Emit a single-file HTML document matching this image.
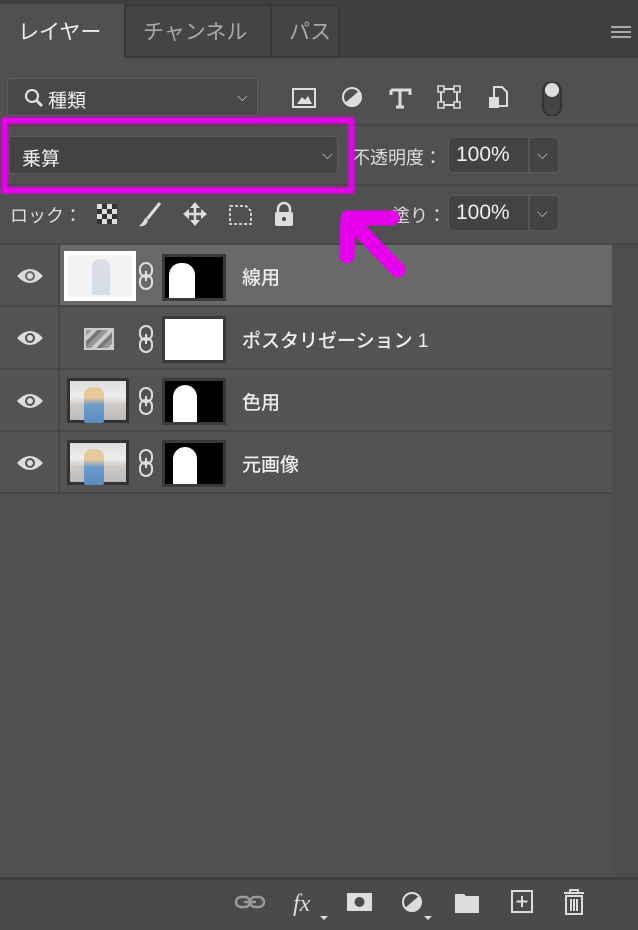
<!DOCTYPE html>
<html><head><meta charset="utf-8"><style>
*{margin:0;padding:0;box-sizing:border-box}
body{width:638px;height:930px;background:#505050;position:relative;overflow:hidden;font-family:"Liberation Sans","Noto Sans CJK JP",sans-serif;color:#ddd}
.a{position:absolute}
.t{font-size:20px}
.row{position:absolute;left:0;width:612px;height:62px;background:#535353;border-bottom:2px solid #474747}
.row .ec{position:absolute;left:0;top:0;width:60px;height:100%;border-right:2px solid #474747;background:#535353}
.thumb{position:absolute;top:8px;width:62px;height:45px;border:3px solid #333}
.mask{position:absolute;left:162px;top:8px;width:64px;height:47px;background:#000;border:3px solid #3a3a3a;overflow:hidden}
.name{position:absolute;left:242px;top:18px;font-size:19px;color:#eee;font-weight:500}
.photo{background:linear-gradient(180deg,#ddd 0%,#eee 40%,#cfc9c5 60%,#bbb 100%)}
</style></head><body>
<div class="a" style="left:0;top:0;width:638px;height:58px;background:#3f3f3f"></div>
<div class="a" style="left:0;top:4px;width:124px;height:56px;background:#505050"></div>
<div class="a" style="left:124px;top:4px;width:148px;height:54px;background:#444;border:2px solid #383838"></div>
<div class="a" style="left:272px;top:4px;width:68px;height:54px;background:#444;border:2px solid #383838;border-left:none"></div>
<div class="a t" style="left:18px;top:16px;color:#eee;font-size:21px">レイヤー</div>
<div class="a t" style="left:143px;top:16px;color:#aaa;font-size:21px">チャンネル</div>
<div class="a t" style="left:289px;top:16px;color:#aaa;font-size:21px">パス</div>
<div class="a" style="left:611px;top:26px;width:20px;height:12px;border-top:2px solid #aaa;border-bottom:2px solid #aaa"><div style="margin-top:3px;border-top:2px solid #aaa"></div></div>
<div class="a" style="left:7px;top:78px;width:251px;height:38px;background:#484848;border:1px solid #5e5e5e;border-radius:4px"></div>
<svg class="a" style="left:24px;top:88px" width="20" height="20"><circle cx="8" cy="8" r="6" fill="none" stroke="#ddd" stroke-width="2.2"/><line x1="12" y1="12" x2="18" y2="18" stroke="#ddd" stroke-width="3"/></svg>
<div class="a" style="left:48px;top:86px;font-size:19px;color:#eee">種類</div>
<div class="a" style="left:237px;top:88px;font-size:14px;color:#ccc">⌵</div>
<svg class="a" style="left:290px;top:82px" width="275" height="34">
<rect x="3" y="7" width="22" height="18" fill="none" stroke="#ddd" stroke-width="2"/><path d="M7 22 L12 15 L15 18 L18 14 L22 22Z" fill="#ddd"/>
<circle cx="62" cy="15" r="9" fill="none" stroke="#ddd" stroke-width="2"/><path d="M55 21 L69 9 A9 9 0 0 1 55 21Z" fill="#ddd"/>
<path d="M101 8 H120 V13 M110 8 V25 M106 25 H114 M101 8 V13" stroke="#ddd" stroke-width="3" fill="none"/>
<rect x="151" y="7" width="16" height="16" fill="none" stroke="#ddd" stroke-width="2"/><rect x="148" y="4" width="6" height="6" fill="#505050" stroke="#ddd" stroke-width="1.5"/><rect x="164" y="4" width="6" height="6" fill="#505050" stroke="#ddd" stroke-width="1.5"/><rect x="148" y="20" width="6" height="6" fill="#505050" stroke="#ddd" stroke-width="1.5"/><rect x="164" y="20" width="6" height="6" fill="#505050" stroke="#ddd" stroke-width="1.5"/>
<path d="M204 5 H212 L217 10 V24 H204Z" fill="none" stroke="#ddd" stroke-width="2"/><rect x="199" y="15" width="10" height="11" fill="#ddd"/>
<rect x="253" y="0" width="18" height="34" rx="9" fill="#444" stroke="#333" stroke-width="2"/><circle cx="262" cy="8" r="7" fill="#ddd"/>
</svg>
<div class="a" style="left:0;top:124px;width:638px;height:2px;background:#474747"></div>
<div class="a" style="left:8px;top:136px;width:330px;height:38px;background:#434343;border:1px solid #5a5a5a;border-radius:4px"></div>
<div class="a" style="left:22px;top:144px;font-size:19px;color:#eee">乗算</div>
<div class="a" style="left:322px;top:146px;font-size:14px;color:#ccc">⌵</div>
<div class="a" style="left:352px;top:144px;font-size:18px;color:#ddd">不透明度：</div>
<div class="a" style="left:448px;top:137px;width:111px;height:36px;background:#434343;border:1px solid #5a5a5a;border-radius:4px"></div>
<div class="a" style="left:528px;top:137px;width:2px;height:36px;background:#555"></div>
<div class="a" style="left:456px;top:143px;font-size:21px;color:#eee">100%</div>
<div class="a" style="left:537px;top:146px;font-size:14px;color:#ccc">⌵</div>
<div class="a" style="left:0;top:184px;width:638px;height:2px;background:#474747"></div>
<div class="a" style="left:10px;top:202px;font-size:18px;color:#ddd">ロック：</div>
<svg class="a" style="left:95px;top:200px" width="210" height="28">
<rect x="2" y="4" width="20" height="20" fill="#ddd"/><g fill="#333"><rect x="7" y="4" width="5" height="5"/><rect x="17" y="4" width="5" height="5"/><rect x="2" y="9" width="5" height="5"/><rect x="12" y="9" width="5" height="5"/><rect x="7" y="14" width="5" height="5"/><rect x="17" y="14" width="5" height="5"/><rect x="2" y="19" width="5" height="5"/><rect x="12" y="19" width="5" height="5"/></g>
<path d="M65 3 L52 19" stroke="#ddd" stroke-width="3"/><path d="M50 18 Q54 20 52 23 Q49 27 44 26 Q48 23 50 18Z" fill="#ddd"/>
<path d="M100 4 V24 M90 14 H110" stroke="#ddd" stroke-width="2.5"/><path d="M95 8 L100 2 L105 8Z M95 20 L100 26 L105 20Z M94 9 L88 14 L94 19Z M106 9 L112 14 L106 19Z" fill="#ddd"/>
<path d="M135 6 H151 L156 11 V24 H135Z" fill="none" stroke="#ddd" stroke-width="1.8" stroke-dasharray="3 2"/>
<rect x="180" y="12" width="18" height="14" rx="2" fill="#ddd"/><path d="M183 13 V9 A6 6 0 0 1 195 9 V13" fill="none" stroke="#ddd" stroke-width="2.5"/><circle cx="189" cy="19" r="2" fill="#444"/>
</svg>
<div class="a" style="left:392px;top:202px;font-size:18px;color:#ddd">塗り：</div>
<div class="a" style="left:448px;top:195px;width:111px;height:36px;background:#434343;border:1px solid #5a5a5a;border-radius:4px"></div>
<div class="a" style="left:528px;top:195px;width:2px;height:36px;background:#555"></div>
<div class="a" style="left:456px;top:201px;font-size:21px;color:#eee">100%</div>
<div class="a" style="left:537px;top:204px;font-size:14px;color:#ccc">⌵</div>
<div class="a" style="left:0;top:243px;width:638px;height:2px;background:#474747"></div>
<div class="a" style="left:612px;top:245px;width:26px;height:633px;background:#4d4d4d"></div>
<div class="row" style="top:245px;background:#696969"><div class="ec"></div>
<div class="thumb" style="left:64px;top:6px;width:72px;height:50px;border:4px solid #fff;background:#f3f3f3"><div style="margin:4px 0 0 24px;width:18px;height:36px;background:linear-gradient(#ccd,#bcd4e4);opacity:.6;border-radius:8px 8px 2px 2px"></div></div>
<div class="mask" style="top:9px"><div style="position:absolute;left:4px;top:6px;width:26px;height:40px;background:#fff;border-radius:12px 12px 0 0"></div></div>
<div class="name">線用</div></div>
<div class="row" style="top:308px"><div class="ec"></div>
<div class="a" style="left:84px;top:20px;width:30px;height:22px;background:repeating-linear-gradient(135deg,#999 0 4px,#ccc 4px 8px,#777 8px 12px);border:2px solid #ccc"></div>
<div class="mask" style="background:#fff"></div>
<div class="name">ポスタリゼーション 1</div></div>
<div class="row" style="top:370px"><div class="ec"></div>
<div class="thumb photo" style="left:67px"><div style="margin:6px 0 0 14px;width:20px;height:36px;background:linear-gradient(#e6c99a 0 30%,#6a9ccc 50%,#5a8cc0);border-radius:8px 8px 2px 2px"></div></div>
<div class="mask"><div style="position:absolute;left:8px;top:4px;width:24px;height:42px;background:#fff;border-radius:12px 12px 0 0"></div></div>
<div class="name">色用</div></div>
<div class="row" style="top:432px"><div class="ec"></div>
<div class="thumb photo" style="left:67px"><div style="margin:6px 0 0 14px;width:20px;height:36px;background:linear-gradient(#e6c99a 0 30%,#6a9ccc 50%,#5a8cc0);border-radius:8px 8px 2px 2px"></div></div>
<div class="mask"><div style="position:absolute;left:8px;top:4px;width:24px;height:42px;background:#fff;border-radius:12px 12px 0 0"></div></div>
<div class="name">元画像</div></div>
<svg class="a" style="left:16px;top:264px" width="30" height="220">
<g fill="#ddd"><path d="M1 12 Q14 -2 27 12 Q14 26 1 12Z"/><path d="M1 74 Q14 60 27 74 Q14 88 1 74Z"/><path d="M1 137 Q14 123 27 137 Q14 151 1 137Z"/><path d="M1 199 Q14 185 27 199 Q14 213 1 199Z"/></g>
<g fill="#535353"><circle cx="14" cy="12" r="5" fill="#696969"/><circle cx="14" cy="74" r="5"/><circle cx="14" cy="137" r="5"/><circle cx="14" cy="199" r="5"/></g>
<g fill="#ddd"><circle cx="14" cy="12" r="3"/><circle cx="14" cy="74" r="3"/><circle cx="14" cy="137" r="3"/><circle cx="14" cy="199" r="3"/></g>
</svg>
<svg class="a" style="left:136px;top:260px" width="22" height="230" fill="none" stroke="#ddd" stroke-width="2">
<g><rect x="4" y="3" width="12" height="14" rx="6"/><rect x="4" y="15" width="12" height="14" rx="6"/><line x1="10" y1="11" x2="10" y2="21"/></g>
<g transform="translate(0,63)"><rect x="4" y="3" width="12" height="14" rx="6"/><rect x="4" y="15" width="12" height="14" rx="6"/><line x1="10" y1="11" x2="10" y2="21"/></g>
<g transform="translate(0,125)"><rect x="4" y="3" width="12" height="14" rx="6"/><rect x="4" y="15" width="12" height="14" rx="6"/><line x1="10" y1="11" x2="10" y2="21"/></g>
<g transform="translate(0,187)"><rect x="4" y="3" width="12" height="14" rx="6"/><rect x="4" y="15" width="12" height="14" rx="6"/><line x1="10" y1="11" x2="10" y2="21"/></g>
</svg>
<div class="a" style="left:0;top:877px;width:638px;height:3px;background:#3e3e3e"></div>
<div class="a" style="left:0;top:880px;width:638px;height:50px;background:#4a4a4a"></div>
<svg class="a" style="left:230px;top:884px" width="370" height="40">
<g fill="none" stroke="#999" stroke-width="2.5"><rect x="6" y="13" width="14" height="10" rx="5"/><rect x="20" y="13" width="14" height="10" rx="5"/></g><line x1="14" y1="18" x2="26" y2="18" stroke="#999" stroke-width="2.5"/>
<text x="63" y="27" font-family="Liberation Serif,serif" font-style="italic" font-size="24" fill="#ddd">fx</text><path d="M90 32 L98 32 L94 36Z" fill="#ddd"/>
<rect x="117" y="9" width="25" height="18" fill="#ddd"/><circle cx="129.5" cy="18" r="5" fill="#4a4a4a"/>
<circle cx="182" cy="18" r="9" fill="none" stroke="#ddd" stroke-width="2"/><path d="M175 24 L189 12 A9 9 0 0 1 175 24Z" fill="#ddd"/><path d="M194 32 L202 32 L198 36Z" fill="#ddd"/>
<path d="M225 10 H234 L236 12 H249 V29 H225Z" fill="#ddd"/>
<rect x="282" y="7" width="20" height="21" fill="none" stroke="#ddd" stroke-width="2"/><path d="M292 12 V23 M286.5 17.5 H297.5" stroke="#ddd" stroke-width="2"/>
<path d="M334 9 H354 M340 9 V6 H348 V9 M336 12 H352 V30 H336Z M341 15 V27 M344 15 V27 M347 15 V27" fill="none" stroke="#ddd" stroke-width="2"/>
</svg>
<div class="a" style="left:2px;top:118px;width:352px;height:75px;border:5px solid #e600ec;box-shadow:0 0 4px #e600ec, inset 0 0 4px #e600ec"></div>
<svg class="a" style="left:330px;top:205px" width="90" height="80">
<g stroke="#e600ec" stroke-width="15" stroke-linecap="round" fill="none"><path d="M68 65 L20 15"/><path d="M18 13 H62"/><path d="M18 13 L17 51"/></g>
</svg>
</body></html>
